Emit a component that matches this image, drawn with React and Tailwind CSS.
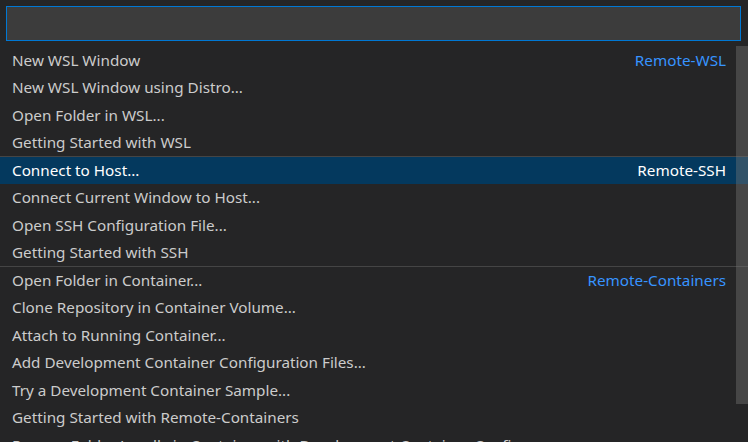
import React from 'react';

const groups = [
  {
    label: 'Remote-WSL',
    items: ['New WSL Window', 'New WSL Window using Distro...', 'Open Folder in WSL...', 'Getting Started with WSL'],
  },
  {
    label: 'Remote-SSH',
    items: ['Connect to Host...', 'Connect Current Window to Host...', 'Open SSH Configuration File...', 'Getting Started with SSH'],
  },
  {
    label: 'Remote-Containers',
    items: [
      'Open Folder in Container...',
      'Clone Repository in Container Volume...',
      'Attach to Running Container...',
      'Add Development Container Configuration Files...',
      'Try a Development Container Sample...',
      'Getting Started with Remote-Containers',
      'Reopen Folder Locally in Container with Development Container Config',
    ],
  },
];

const Row = ({ text, label, first, selected, divider }) => (
  <div
    className={`h-[27.5px] flex items-stretch ${divider ? 'border-t border-[#454545]' : ''}`}
  >
    <div
      className={`flex-1 flex items-center justify-between pl-[12px] pr-[22px] pt-[1px] ${
        selected ? 'bg-[#04395e] text-white' : 'text-[#cccccc]'
      }`}
    >
      <span className="whitespace-nowrap">{text}</span>
      {first && (
        <span className={selected ? 'text-white' : 'text-[#3794ff]'}>{label}</span>
      )}
    </div>
  </div>
);

export default function App() {
  return (
    <div
      className="relative w-[748px] h-[442px] overflow-hidden bg-[#252526] text-[15.25px] leading-none"
      style={{ fontFamily: '"Noto Sans", "Open Sans", sans-serif' }}
    >
      {/* search box */}
      <div className="pt-[6px] pl-[6px] pr-[7px] h-[46px]">
        <div className="h-[35px] bg-[#3c3c3c] border border-[#0078d4]" />
      </div>

      {/* list */}
      <div>
        {groups.map((g, gi) =>
          g.items.map((it, i) => (
            <Row
              key={it}
              text={it}
              label={g.label}
              first={i === 0}
              divider={gi > 0 && i === 0}
              selected={gi === 1 && i === 0}
            />
          ))
        )}
      </div>

      {/* scrollbar */}
      <div className="absolute right-0 top-[46px] w-[12px] h-[358px] bg-[rgba(121,121,121,0.4)]" />
    </div>
  );
}
